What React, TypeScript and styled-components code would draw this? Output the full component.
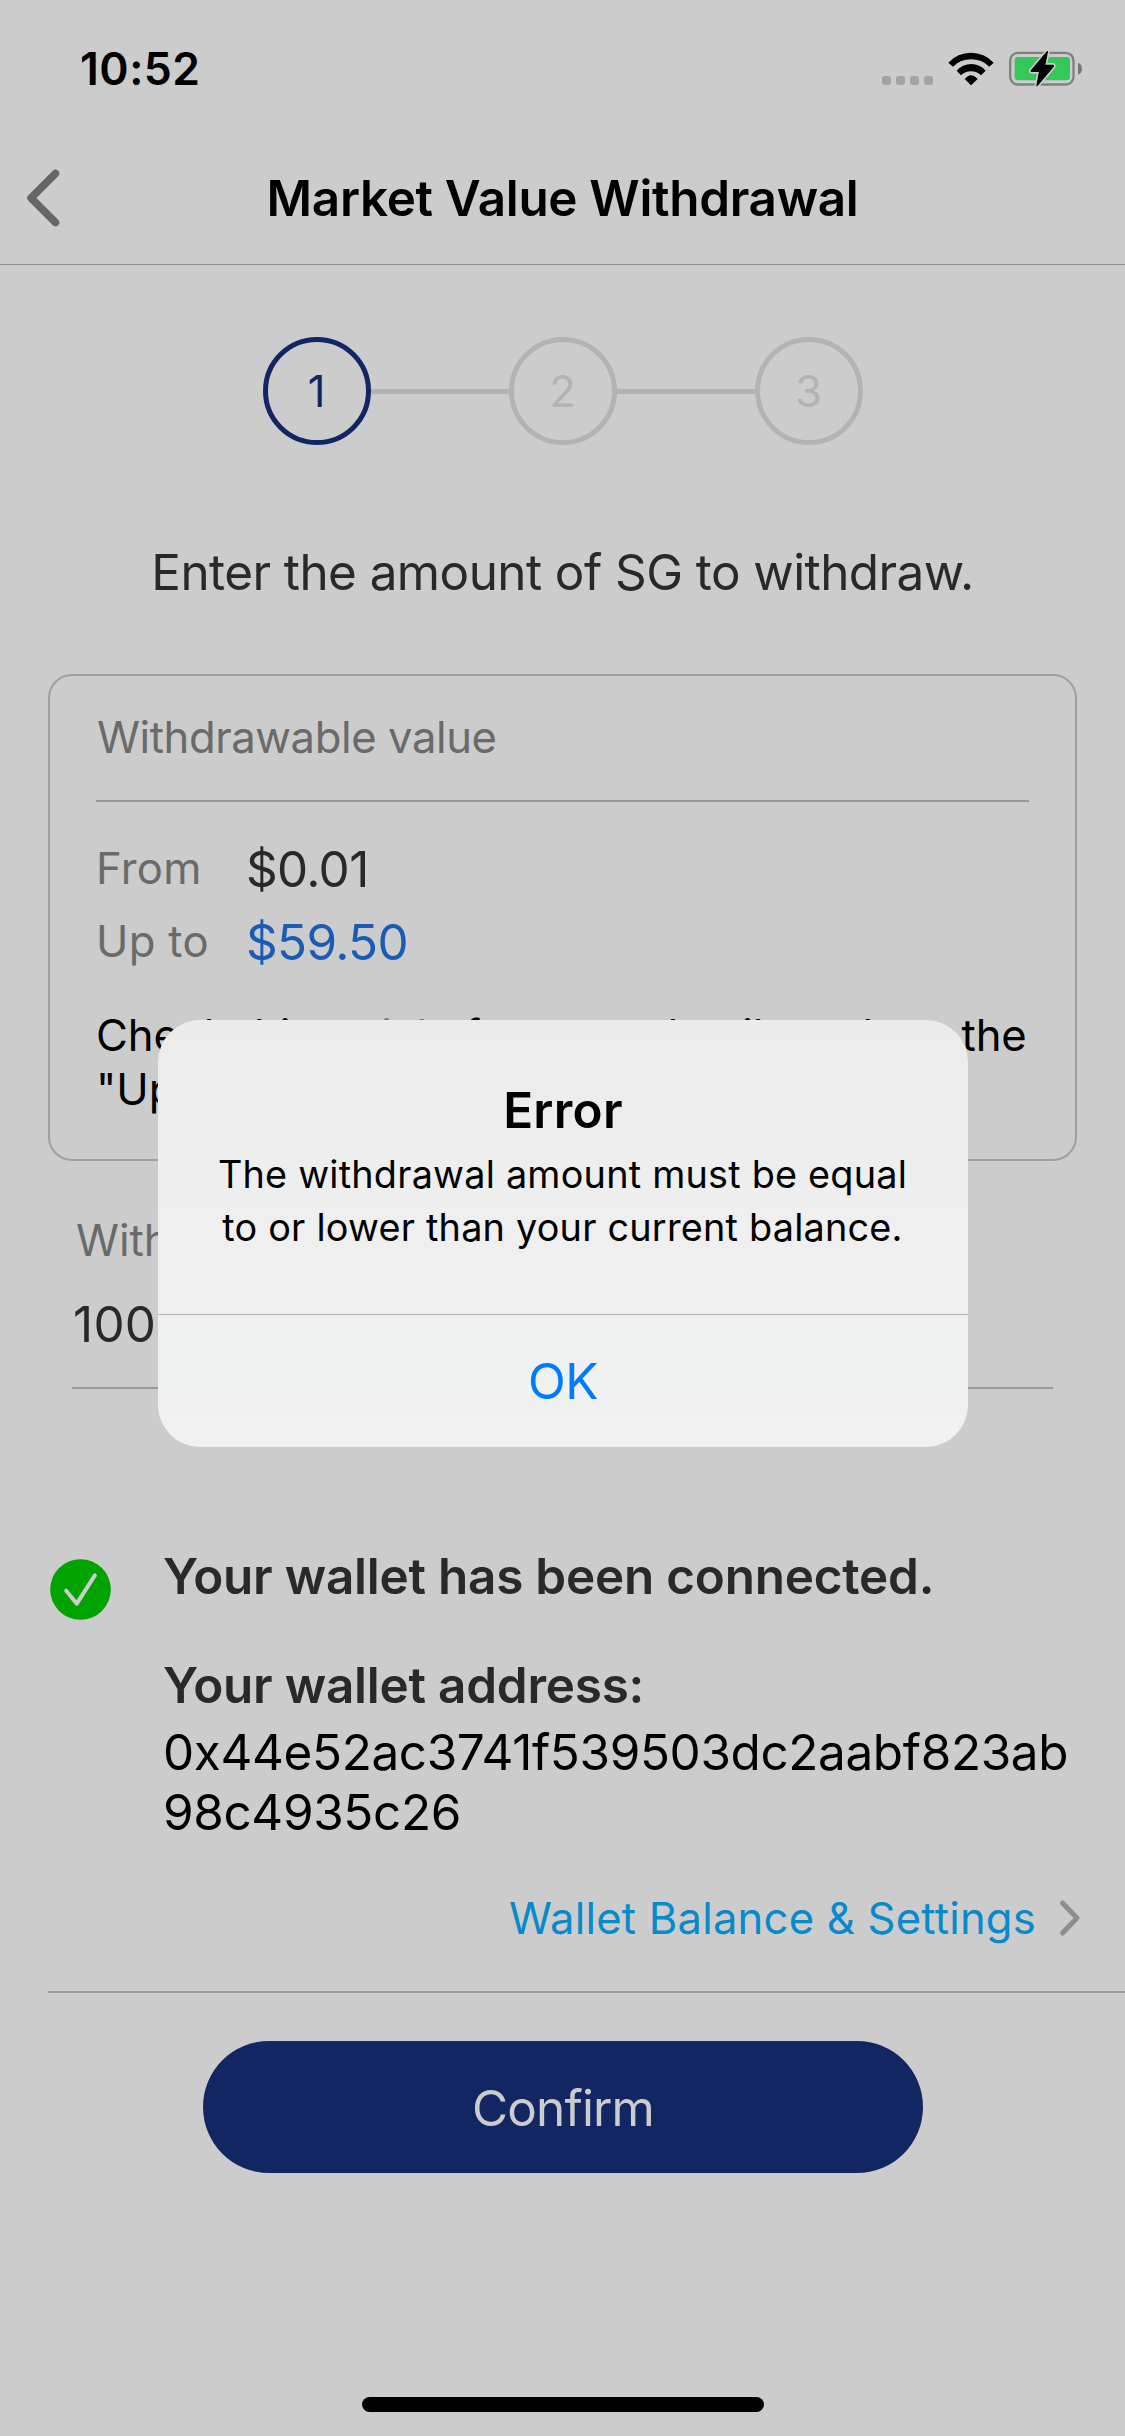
import React from "react";
import styled, { createGlobalStyle } from "styled-components";

const color = {
  page: "#cccccc",
  navy: "#122663",
  muted: "#b3b3b3",
  rule: "#9a9a9a",
  label: "#6a6a6a",
  ink: "#292929",
};

const GlobalStyle = createGlobalStyle`
  * { box-sizing: border-box; }
  body {
    margin: 0;
    background: ${color.page};
    font-family: Inter, "Liberation Sans", sans-serif;
    color: #000;
  }
  h1, h2, p { margin: 0; }
  button { border: 0; background: none; padding: 0; font-family: inherit; }
  svg { display: block; flex: none; }
`;

const Screen = styled.div`
  position: relative;
  display: flex;
  flex-direction: column;
  width: 1125px;
  height: 2436px;
  overflow: hidden;
  background: ${color.page};
`;

const StatusBar = styled.div`
  display: flex;
  justify-content: space-between;
  align-items: flex-start;
  height: 132px;
  padding: 49px 40px 0 80px;
`;

const Clock = styled.span`
  font-size: 44.5px;
  font-weight: 600;
  line-height: 40px;
  letter-spacing: 0.5px;
`;

const StatusIcons = styled.div`
  display: flex;
  align-items: flex-start;
`;

const Dots = styled.div`
  display: flex;
  gap: 5px;
  margin: 27px 15px 0 0;
`;

const Dot = styled.i`
  width: 9px;
  height: 9px;
  border-radius: 3px;
  background: #a3a3a3;
`;

const WifiSlot = styled.div`
  padding: 3px 11px 0 0;
`;

const NavBar = styled.header`
  display: grid;
  grid-template-columns: 120px 1fr 120px;
  align-items: center;
  height: 133px;
  border-bottom: 1px solid #8c8c8c;
`;

const BackButton = styled.button`
  display: flex;
  padding-left: 23px;
`;

const NavTitle = styled.h1`
  text-align: center;
  font-size: 49.4px;
  font-weight: 600;
  line-height: 60px;
  letter-spacing: -0.3px;
`;

const Steps = styled.div`
  display: flex;
  align-items: center;
  justify-content: center;
  margin-top: 72px;
`;

const Step = styled.div<{ $active?: boolean }>`
  display: flex;
  align-items: center;
  justify-content: center;
  width: 108px;
  height: 108px;
  padding-top: 1px;
  border: 5px solid ${(p) => (p.$active ? color.navy : color.muted)};
  border-radius: 50%;
  color: ${(p) => (p.$active ? color.navy : color.muted)};
  font-size: 43.6px;
  line-height: 54px;
`;

const StepLine = styled.div`
  width: 138px;
  height: 5px;
  background: ${color.muted};
`;

const Prompt = styled.p`
  margin-top: 97px;
  text-align: center;
  font-size: 49.4px;
  line-height: 60px;
  letter-spacing: -0.55px;
  color: ${color.ink};
`;

const Card = styled.section`
  margin: 72px 48px 0;
  height: 487px;
  padding: 0 46px;
  border: 2px solid #a0a0a0;
  border-radius: 24px;
`;

const CardTitle = styled.h2`
  font-size: 43.6px;
  font-weight: 400;
  line-height: 124px;
  height: 124px;
  letter-spacing: -0.4px;
  padding-left: 1px;
  color: ${color.label};
`;

const CardRule = styled.div`
  height: 2px;
  margin-bottom: 30px;
  background: ${color.rule};
`;

const ValueRow = styled.div`
  display: grid;
  grid-template-columns: 150px 1fr;
  align-items: center;
  height: 73px;
`;

const ValueLabel = styled.span`
  font-size: 43.6px;
  letter-spacing: 0.3px;
  color: ${color.label};
`;

const ValueAmount = styled.span<{ $highlight?: boolean }>`
  font-size: 49.4px;
  line-height: 60px;
  letter-spacing: -0.65px;
  color: ${(p) => (p.$highlight ? "#1a5bb7" : color.ink)};
`;

const Note = styled.p`
  margin-top: 31px;
  font-size: 43.6px;
  line-height: 54px;
  letter-spacing: -0.05px;
  white-space: nowrap;
`;

const NoteLink = styled.span`
  color: #777;
`;

const Field = styled.div`
  margin: 53px 72px 0;
  border-bottom: 2px solid ${color.rule};
`;

const FieldLabel = styled.div`
  padding-left: 4px;
  font-size: 43.6px;
  line-height: 54px;
  color: ${color.label};
`;

const FieldValue = styled.div`
  padding: 26px 0 33px 1px;
  font-size: 49.4px;
  line-height: 60px;
  letter-spacing: 0.3px;
  color: ${color.ink};
`;

const Wallet = styled.section`
  display: grid;
  grid-template-columns: 113px 1fr;
  margin: 157px 0 0 50px;
`;

const CheckSlot = styled.div`
  padding-top: 13px;
`;

const WalletHeading = styled.h2`
  font-size: 49.4px;
  font-weight: 600;
  line-height: 60px;
  letter-spacing: -0.2px;
  color: ${color.ink};

  & + & {
    margin-top: 49px;
  }
`;

const Address = styled.p`
  width: 925px;
  margin-top: 7px;
  font-size: 49.4px;
  line-height: 60px;
  letter-spacing: -0.35px;
  word-break: break-all;
`;

const SettingsLink = styled.div`
  display: flex;
  justify-content: flex-end;
  align-items: center;
  gap: 22px;
  height: 54px;
  margin-top: 49px;
  padding-right: 43px;
  font-size: 43.6px;
  letter-spacing: 0.2px;
  color: #058acb;
`;

const SectionRule = styled.div`
  height: 2px;
  margin: 46px 0 48px 48px;
  background: ${color.rule};
`;

const ConfirmButton = styled.button`
  flex: none;
  align-self: center;
  width: 720px;
  height: 132px;
  padding: 2px 0 0 1px;
  border-radius: 66px;
  background: ${color.navy};
  color: #cccccc;
  font-size: 49.4px;
  letter-spacing: -0.8px;
`;

const HomeIndicator = styled.div`
  flex: none;
  align-self: center;
  width: 402px;
  height: 15px;
  margin: auto 0 24px;
  border-radius: 8px;
  background: #000;
`;

const Overlay = styled.div`
  position: absolute;
  inset: 0;
  display: flex;
  align-items: flex-start;
  justify-content: center;
  padding-top: 1020px;
`;

const Alert = styled.div`
  display: flex;
  flex-direction: column;
  width: 810px;
  height: 427px;
  overflow: hidden;
  border-radius: 42px;
  background: linear-gradient(#ebebeb, #efefef 45%, #f0f1f1);
  text-align: center;
`;

const AlertBody = styled.div`
  height: 294px;
  padding-top: 60px;
`;

const AlertTitle = styled.h2`
  padding-left: 1px;
  font-size: 49.4px;
  font-weight: 600;
  line-height: 60px;
  letter-spacing: 0.3px;
`;

const AlertMessage = styled.p`
  margin-top: 8px;
  font-size: 37.8px;
  line-height: 53px;
  letter-spacing: 0.22px;
`;

const AlertAction = styled.button`
  flex: 1;
  padding-left: 1px;
  border-top: 1px solid #b0b0b0;
  color: #007aff;
  font-size: 49.4px;
  letter-spacing: -0.6px;
`;

const Wifi = () => (
  <svg width="46" height="34" viewBox="264 65 138 102">
    <path d="M265 97A92 92 0 0 1 401 97L388 109A77 77 0 0 0 279 109Z" />
    <path d="M290 121A57 57 0 0 1 377 121L363 135A42 42 0 0 0 303 135Z" />
    <path d="M314 146Q333 123 353 146L333 165Z" />
  </svg>
);

const Battery = () => (
  <svg width="80" height="39.33" viewBox="435 58 240 118">
    <rect x="450.5" y="69.5" width="190" height="95" rx="23" fill="none" stroke="#808080" strokeWidth="7" />
    <rect x="464" y="82" width="166" height="70" rx="10" fill="#34c759" />
    <path d="M654 99Q666 104 666 117T654 135Z" fill="#777" />
    <path
      d="M562 66L514 123Q513 125 516 125L539 125L531 168L580 110Q581 108 578 107L554 107Z"
      fill="#000"
      stroke={color.page}
      strokeWidth="14"
      strokeLinejoin="round"
      paintOrder="stroke"
    />
    <path
      d="M562 66L514 123Q513 125 516 125L539 125L531 168L580 110Q581 108 578 107L554 107Z"
      stroke="#000"
      strokeWidth="4"
      strokeLinejoin="round"
    />
  </svg>
);

const BackIcon = () => (
  <svg width="38" height="60" viewBox="0 0 38 60" fill="none" stroke="#666" strokeWidth="7.5" strokeLinecap="round" strokeLinejoin="round">
    <path d="M32.5 5.5L8 30L32.5 54.5" />
  </svg>
);

const ForwardIcon = () => (
  <svg width="24" height="40" viewBox="0 0 24 40" fill="none" stroke="#8e8e8e" strokeWidth="5" strokeLinecap="round" strokeLinejoin="round">
    <path d="M4.5 5L19 20L4.5 35" />
  </svg>
);

const CheckIcon = () => (
  <svg width="61" height="61" viewBox="61.5 58 183 183">
    <circle cx="153" cy="149.5" r="91" fill="#00a300" />
    <path d="M110 153L142 192L196 107" fill="none" stroke={color.page} strokeWidth="12" strokeLinecap="round" strokeLinejoin="round" />
  </svg>
);

export default function App() {
  return (
    <>
      <GlobalStyle />
      <Screen>
        <StatusBar>
          <Clock>10:52</Clock>
          <StatusIcons>
            <Dots>
              <Dot />
              <Dot />
              <Dot />
              <Dot />
            </Dots>
            <WifiSlot>
              <Wifi />
            </WifiSlot>
            <Battery />
          </StatusIcons>
        </StatusBar>

        <NavBar>
          <BackButton aria-label="Back">
            <BackIcon />
          </BackButton>
          <NavTitle>Market Value Withdrawal</NavTitle>
        </NavBar>

        <Steps>
          <Step $active>1</Step>
          <StepLine />
          <Step>2</Step>
          <StepLine />
          <Step>3</Step>
        </Steps>

        <Prompt>Enter the amount of SG to withdraw.</Prompt>

        <Card>
          <CardTitle>Withdrawable value</CardTitle>
          <CardRule />
          <ValueRow>
            <ValueLabel>From</ValueLabel>
            <ValueAmount>$0.01</ValueAmount>
          </ValueRow>
          <ValueRow>
            <ValueLabel>Up to</ValueLabel>
            <ValueAmount $highlight>$59.50</ValueAmount>
          </ValueRow>
          <Note>
            Check this <NoteLink>article</NoteLink> for more details on how the
            <br />
            "Up to"
          </Note>
        </Card>

        <Field>
          <FieldLabel>With</FieldLabel>
          <FieldValue>100</FieldValue>
        </Field>

        <Wallet>
          <CheckSlot>
            <CheckIcon />
          </CheckSlot>
          <div>
            <WalletHeading>Your wallet has been connected.</WalletHeading>
            <WalletHeading>Your wallet address:</WalletHeading>
            <Address>0x44e52ac3741f539503dc2aabf823ab98c4935c26</Address>
          </div>
        </Wallet>

        <SettingsLink>
          Wallet Balance &amp; Settings
          <ForwardIcon />
        </SettingsLink>
        <SectionRule />

        <ConfirmButton>Confirm</ConfirmButton>
        <HomeIndicator />

        <Overlay>
          <Alert role="alertdialog">
            <AlertBody>
              <AlertTitle>Error</AlertTitle>
              <AlertMessage>
                The withdrawal amount must be equal
                <br />
                to or lower than your current balance.
              </AlertMessage>
            </AlertBody>
            <AlertAction>OK</AlertAction>
          </Alert>
        </Overlay>
      </Screen>
    </>
  );
}
